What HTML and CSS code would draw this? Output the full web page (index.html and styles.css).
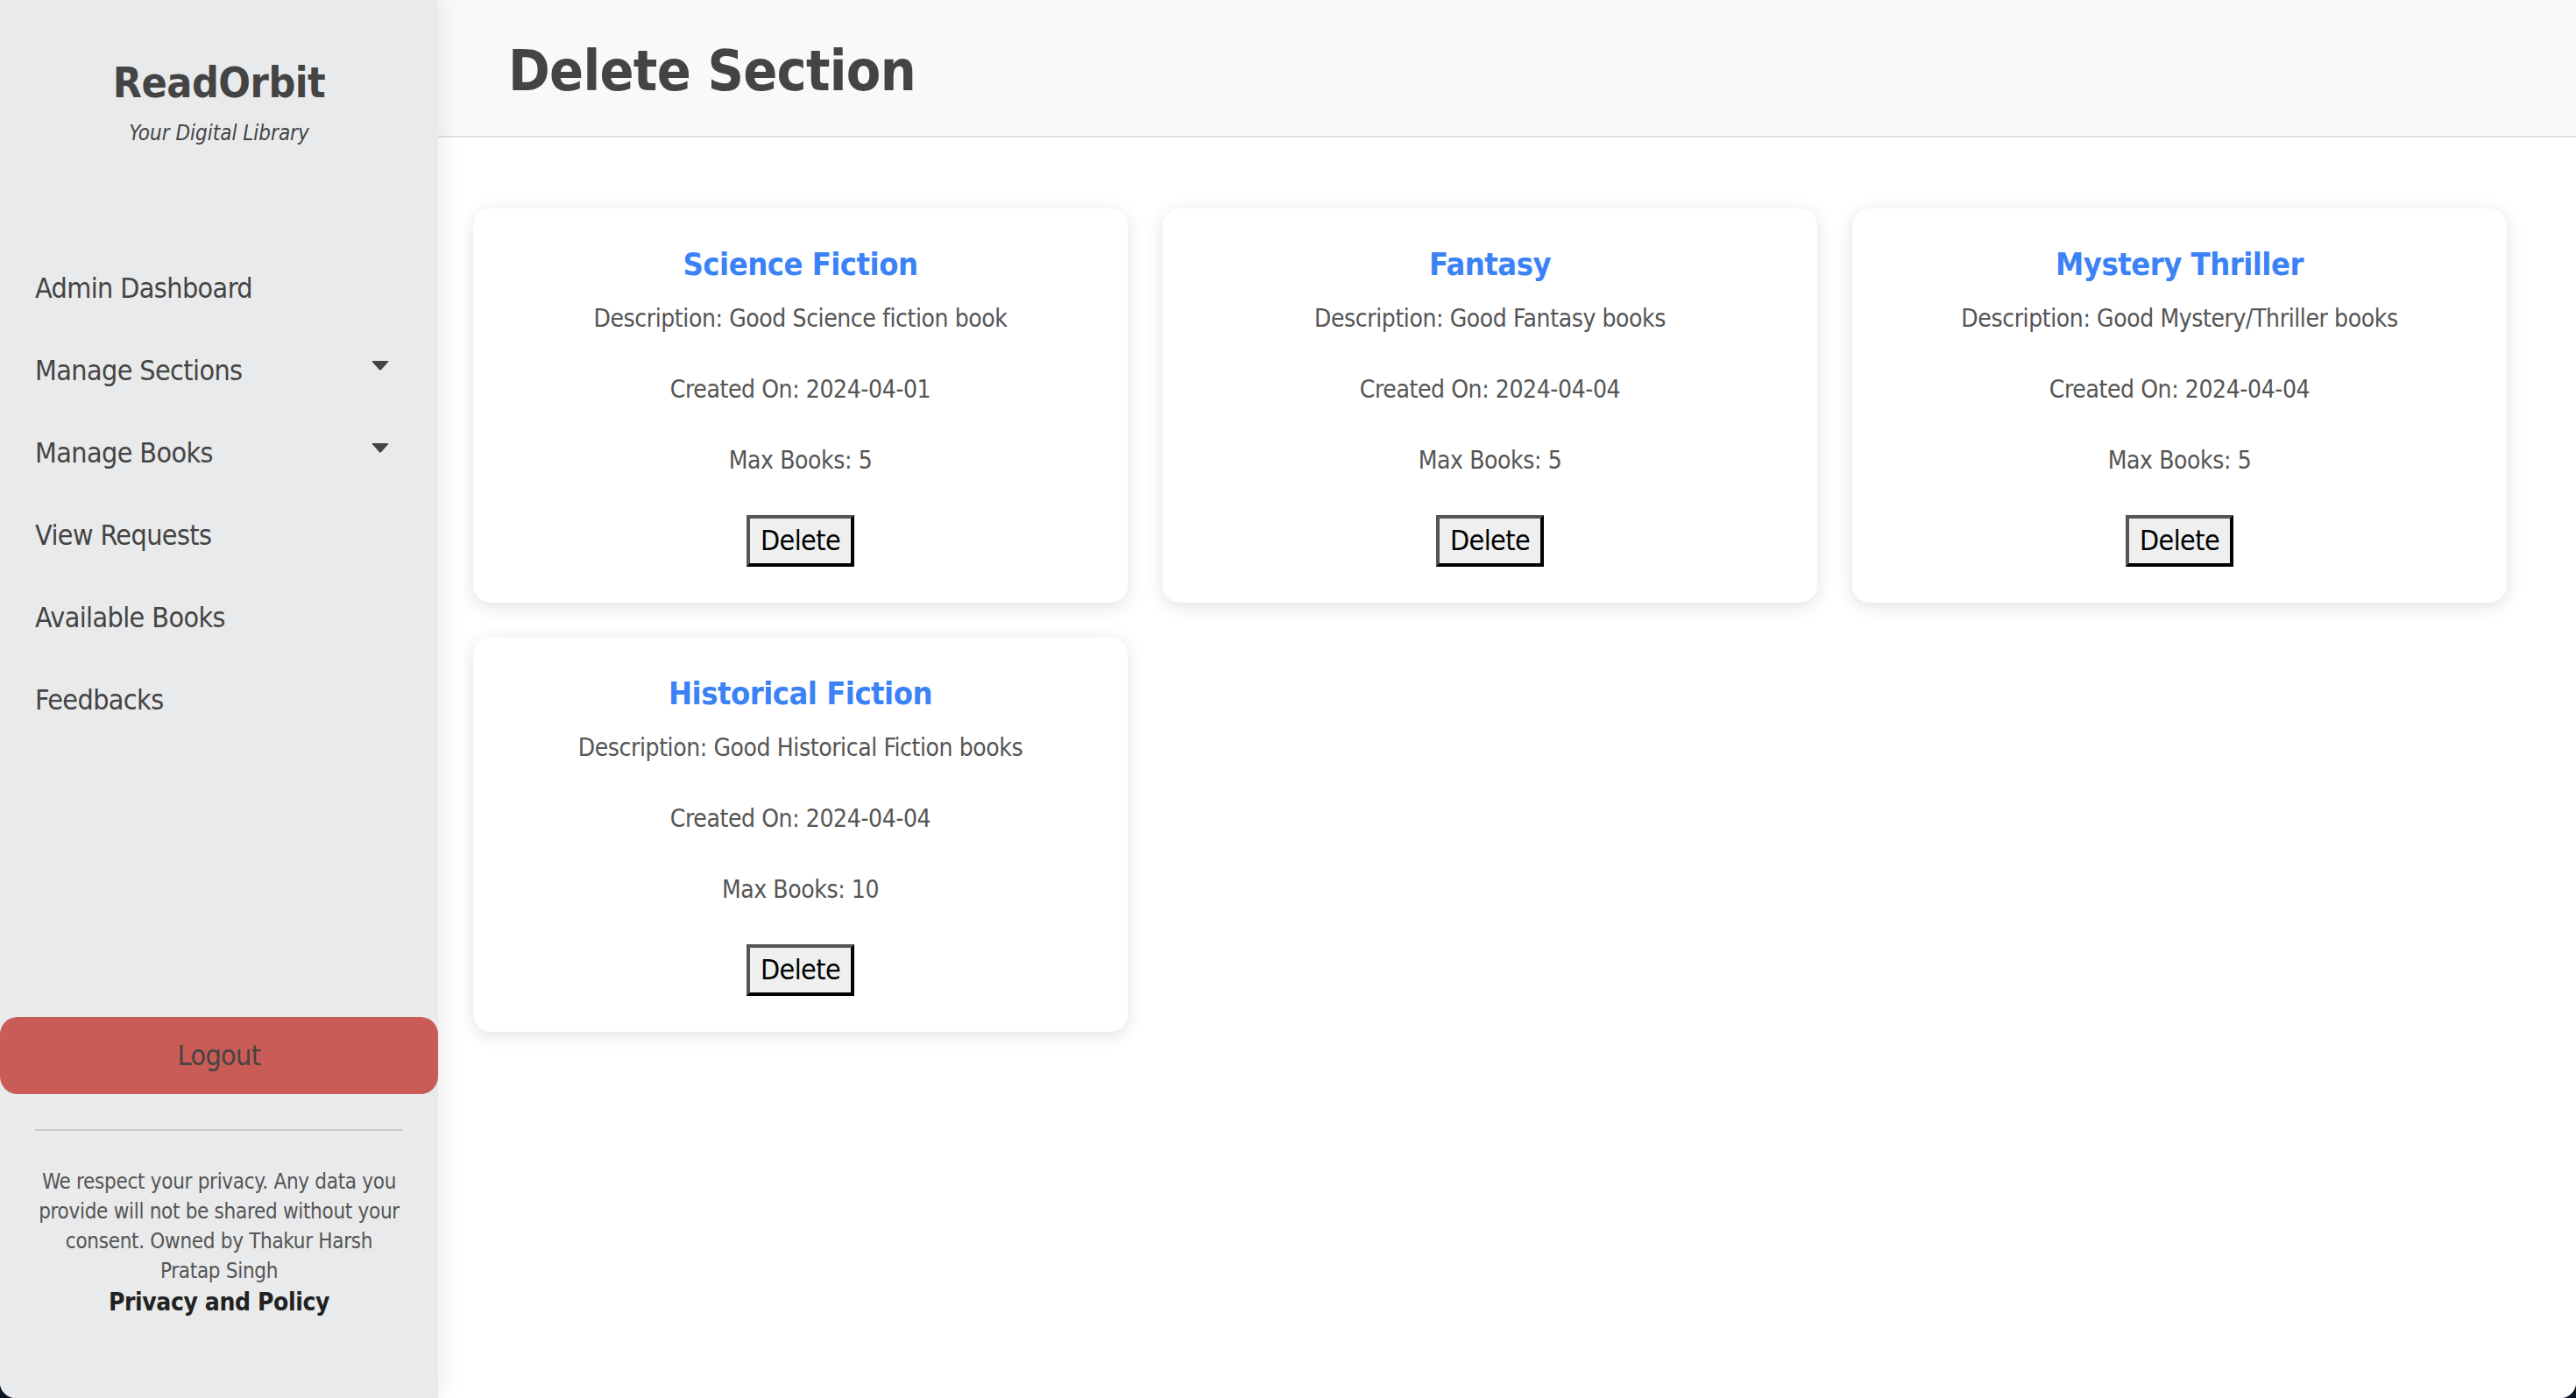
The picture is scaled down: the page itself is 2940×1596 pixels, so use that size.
FILE: index.html
```html
<!DOCTYPE html>
<html lang="en">
<head>
<meta charset="utf-8">
<title>Delete Section - ReadOrbit</title>
<link rel="stylesheet" href="styles.css">
</head>
<body>
<div class="app">
  <aside class="sidebar">
    <div class="brand">
      <div class="brand-name">ReadOrbit</div>
      <div class="brand-tag">Your Digital Library</div>
    </div>
    <nav class="nav">
      <a class="nav-item" href="#">Admin Dashboard</a>
      <a class="nav-item" href="#">Manage Sections
        <svg class="caret" viewBox="0 0 20 11"><path d="M1.5 0 H18.5 Q20 0 19 1.2 L11 10.2 Q10 11 9 10.2 L1 1.2 Q0 0 1.5 0 Z"/></svg>
      </a>
      <a class="nav-item" href="#">Manage Books
        <svg class="caret" viewBox="0 0 20 11"><path d="M1.5 0 H18.5 Q20 0 19 1.2 L11 10.2 Q10 11 9 10.2 L1 1.2 Q0 0 1.5 0 Z"/></svg>
      </a>
      <a class="nav-item" href="#">View Requests</a>
      <a class="nav-item" href="#">Available Books</a>
      <a class="nav-item" href="#">Feedbacks</a>
    </nav>
    <div class="sidebar-foot">
      <button class="logout" type="button">Logout</button>
      <hr class="rule">
      <p class="privacy">We respect your privacy. Any data you<br>provide will not be shared without your<br>consent. Owned by Thakur Harsh<br>Pratap Singh</p>
      <a class="policy" href="#">Privacy and Policy</a>
    </div>
  </aside>
  <main class="main">
    <header class="topbar">
      <h1 class="page-title">Delete Section</h1>
    </header>
    <section class="grid">
      <div class="card">
        <h3 class="card-title">Science Fiction</h3>
        <p class="card-text">Description: Good Science fiction book</p>
        <p class="card-text">Created On: 2024-04-01</p>
        <p class="card-text">Max Books: 5</p>
        <button class="btn" type="button">Delete</button>
      </div>
      <div class="card">
        <h3 class="card-title">Fantasy</h3>
        <p class="card-text">Description: Good Fantasy books</p>
        <p class="card-text">Created On: 2024-04-04</p>
        <p class="card-text">Max Books: 5</p>
        <button class="btn" type="button">Delete</button>
      </div>
      <div class="card">
        <h3 class="card-title">Mystery Thriller</h3>
        <p class="card-text">Description: Good Mystery/Thriller books</p>
        <p class="card-text">Created On: 2024-04-04</p>
        <p class="card-text">Max Books: 5</p>
        <button class="btn" type="button">Delete</button>
      </div>
      <div class="card">
        <h3 class="card-title">Historical Fiction</h3>
        <p class="card-text">Description: Good Historical Fiction books</p>
        <p class="card-text">Created On: 2024-04-04</p>
        <p class="card-text">Max Books: 10</p>
        <button class="btn" type="button">Delete</button>
      </div>
    </section>
  </main>
</div>
</body>
</html>
```
FILE: styles.css
```css
html, body {
  margin: 0;
  padding: 0;
  height: 100%;
  background: #0c1622;
}

body {
  font-family: "DejaVu Sans Condensed", "DejaVu Sans", sans-serif;
  font-stretch: condensed;
}

.app {
  display: flex;
  height: 100vh;
  background: #ffffff;
  border-radius: 0 0 18px 18px;
  overflow: hidden;
}

/* Sidebar */
.sidebar {
  width: 500px;
  flex: none;
  background: #e9eaeb;
  box-shadow: 4px 0 24px rgba(0, 0, 0, 0.08);
  position: relative;
  z-index: 1;
  display: flex;
  flex-direction: column;
  color: #444444;
}

.brand {
  padding-top: 66px;
  text-align: center;
}

.brand-name {
  font-size: 48px;
  line-height: 56px;
  font-weight: bold;
  letter-spacing: -0.5px;
}

.brand-tag {
  margin-top: 16px;
  font-size: 24px;
  line-height: 28px;
  font-style: italic;
}

.nav {
  margin-top: 116px;
  flex: 1;
  display: flex;
  flex-direction: column;
}

.nav-item {
  display: flex;
  justify-content: space-between;
  align-items: flex-start;
  padding: 28px 56px 28px 40px;
  font-size: 32px;
  line-height: 38px;
  color: #444444;
  text-decoration: none;
  letter-spacing: -0.6px;
}

.caret {
  width: 20px;
  height: 11px;
  margin-top: 8px;
  fill: #444444;
}

.sidebar-foot {
  display: flex;
  flex-direction: column;
}

.logout {
  height: 88px;
  width: 100%;
  border: 0;
  border-radius: 20px;
  background: #c95c56;
  color: #444444;
  font-family: inherit;
  font-size: 32px;
  letter-spacing: -0.6px;
}

.rule {
  margin: 40px 40px 0;
  border: 0;
  border-top: 2px solid #cccccc;
  height: 0;
}

.privacy {
  margin: 41px 20px 0;
  font-size: 24px;
  line-height: 34px;
  text-align: center;
  color: #555555;
  letter-spacing: -0.3px;
}

.policy {
  display: block;
  margin-top: 2px;
  padding-bottom: 92px;
  font-size: 28px;
  line-height: 34px;
  font-weight: bold;
  text-align: center;
  color: #222222;
  text-decoration: none;
  letter-spacing: -0.4px;
}

/* Main */
.main {
  flex: 1;
  min-width: 0;
  background: #ffffff;
}

.topbar {
  background: #f8f9fa;
  border-bottom: 2px solid #e1e2e4;
  padding: 43px 80px 36px 80px;
}

.page-title {
  margin: 0;
  font-size: 64px;
  line-height: 76px;
  font-weight: bold;
  color: #444444;
  letter-spacing: -0.7px;
}

.grid {
  display: grid;
  grid-template-columns: repeat(3, 747px);
  gap: 40px;
  padding: 81px 40px;
}

.card {
  background: #ffffff;
  border-radius: 20px;
  box-shadow: 0 4px 20px rgba(0, 0, 0, 0.12);
  padding: 42px 20px 41px;
  text-align: center;
}

.card-title {
  margin: 0;
  font-size: 36px;
  line-height: 44px;
  font-weight: bold;
  color: #3b82f6;
  letter-spacing: -0.5px;
}

.card-text {
  margin: 23px 0 0;
  font-size: 28px;
  line-height: 34px;
  color: #555555;
  letter-spacing: -0.4px;
}

.card-text + .card-text {
  margin-top: 47px;
}

.btn {
  margin-top: 45px;
  padding: 7px 12px;
  font-family: inherit;
  font-size: 32px;
  line-height: 37px;
  color: #000000;
  background: #efefef;
  border: 4px solid;
  border-color: #555555 #000000 #000000 #555555;
  letter-spacing: -0.6px;
}
```
